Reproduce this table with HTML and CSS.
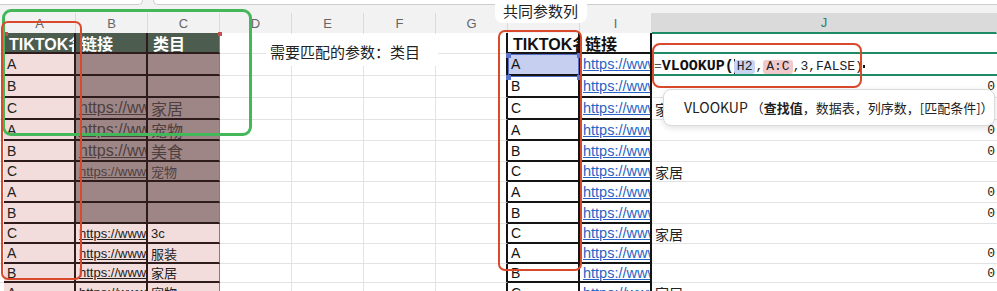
FILE: index.html
```html
<!DOCTYPE html>
<html lang="zh-CN">
<head>
<meta charset="utf-8">
<title>VLOOKUP 匹配类目</title>
<link rel="stylesheet" href="styles.css">
</head>
<body>
<div class="sheet">
  <div class="toolbar">
    <div class="toolbar-box name-box"></div>
    <div class="toolbar-box formula-box"></div>
  </div>

  <div class="col-heads">
    <div class="col-gutter"></div>
    <div class="col-head">A</div>
    <div class="col-head">B</div>
    <div class="col-head">C</div>
    <div class="col-head">D</div>
    <div class="col-head">E</div>
    <div class="col-head">F</div>
    <div class="col-head">G</div>
    <div class="col-head"></div>
    <div class="col-head">I</div>
    <div class="col-head active">J</div>
  </div>

  <div class="cells">
    <!-- row 1 -->
    <div class="gutter"></div>
    <div class="ta hd">TIKTOK名</div>
    <div class="ta hd">链接</div>
    <div class="ta hd last">类目</div>
    <div class="gl"></div><div class="gl"></div><div class="gl"></div><div class="gl edge"></div>
    <div class="tb hd">TIKTOK名</div>
    <div class="tb hd">链接</div>
    <div class="jc active-top"></div>
    <!-- row 2 -->
    <div class="gutter"></div>
    <div class="ta pk">A</div>
    <div class="ta dk"></div>
    <div class="ta dk last"></div>
    <div class="gl"></div><div class="gl"></div><div class="gl"></div><div class="gl edge"></div>
    <div class="tb sel">A</div>
    <div class="tb url">https://www</div>
    <div class="jc editing">
      <span class="fx-eq">=</span><span class="fx-fn">VLOOKUP(</span><span class="caret"></span><span class="ref ref-h">H2</span><span>,</span><span class="ref ref-a">A:C</span><span>,3,FALSE)</span><span class="caret-dot"></span>
    </div>
    <!-- row 3 -->
    <div class="gutter"></div>
    <div class="ta pk">B</div>
    <div class="ta dk"></div>
    <div class="ta dk last"></div>
    <div class="gl"></div><div class="gl"></div><div class="gl"></div><div class="gl edge"></div>
    <div class="tb">B</div>
    <div class="tb url">https://www</div>
    <div class="jc num">0</div>
    <!-- row 4 -->
    <div class="gutter"></div>
    <div class="ta pk">C</div>
    <div class="ta dk ln f16">https://www</div>
    <div class="ta dk last f16">家居</div>
    <div class="gl"></div><div class="gl"></div><div class="gl"></div><div class="gl edge"></div>
    <div class="tb">C</div>
    <div class="tb url">https://www</div>
    <div class="jc">家居</div>
    <!-- row 5 -->
    <div class="gutter"></div>
    <div class="ta pk">A</div>
    <div class="ta dk ln f16">https://www</div>
    <div class="ta dk last f16">宠物</div>
    <div class="gl"></div><div class="gl"></div><div class="gl"></div><div class="gl edge"></div>
    <div class="tb">A</div>
    <div class="tb url">https://www</div>
    <div class="jc num">0</div>
    <!-- row 6 -->
    <div class="gutter"></div>
    <div class="ta pk">B</div>
    <div class="ta dk ln f16">https://www</div>
    <div class="ta dk last f16">美食</div>
    <div class="gl"></div><div class="gl"></div><div class="gl"></div><div class="gl edge"></div>
    <div class="tb">B</div>
    <div class="tb url">https://www</div>
    <div class="jc num">0</div>
    <!-- row 7 -->
    <div class="gutter"></div>
    <div class="ta pk">C</div>
    <div class="ta dk ln f13">https://www</div>
    <div class="ta dk last f13">宠物</div>
    <div class="gl"></div><div class="gl"></div><div class="gl"></div><div class="gl edge"></div>
    <div class="tb">C</div>
    <div class="tb url">https://www</div>
    <div class="jc">家居</div>
    <!-- row 8 -->
    <div class="gutter"></div>
    <div class="ta pk">A</div>
    <div class="ta dk"></div>
    <div class="ta dk last"></div>
    <div class="gl"></div><div class="gl"></div><div class="gl"></div><div class="gl edge"></div>
    <div class="tb">A</div>
    <div class="tb url">https://www</div>
    <div class="jc num">0</div>
    <!-- row 9 -->
    <div class="gutter"></div>
    <div class="ta pk">B</div>
    <div class="ta dk"></div>
    <div class="ta dk last"></div>
    <div class="gl"></div><div class="gl"></div><div class="gl"></div><div class="gl edge"></div>
    <div class="tb">B</div>
    <div class="tb url">https://www</div>
    <div class="jc num">0</div>
    <!-- row 10 -->
    <div class="gutter"></div>
    <div class="ta pk">C</div>
    <div class="ta pk ln f13">https://www</div>
    <div class="ta pk last f13">3c</div>
    <div class="gl"></div><div class="gl"></div><div class="gl"></div><div class="gl edge"></div>
    <div class="tb">C</div>
    <div class="tb url">https://www</div>
    <div class="jc">家居</div>
    <!-- row 11 -->
    <div class="gutter"></div>
    <div class="ta pk">A</div>
    <div class="ta pk ln f13">https://www</div>
    <div class="ta pk last f13">服装</div>
    <div class="gl"></div><div class="gl"></div><div class="gl"></div><div class="gl edge"></div>
    <div class="tb">A</div>
    <div class="tb url">https://www</div>
    <div class="jc num">0</div>
    <!-- row 12 -->
    <div class="gutter"></div>
    <div class="ta pk">B</div>
    <div class="ta pk ln f13">https://www</div>
    <div class="ta pk last f13">家居</div>
    <div class="gl"></div><div class="gl"></div><div class="gl"></div><div class="gl edge"></div>
    <div class="tb">B</div>
    <div class="tb url">https://www</div>
    <div class="jc num">0</div>
    <!-- row 13 -->
    <div class="gutter"></div>
    <div class="ta pk">A</div>
    <div class="ta pk ln f13">https://www</div>
    <div class="ta pk last f13">宠物</div>
    <div class="gl"></div><div class="gl"></div><div class="gl"></div><div class="gl edge"></div>
    <div class="tb">C</div>
    <div class="tb url">https://www</div>
    <div class="jc">家居</div>
  </div>

  <!-- floating text box in D1:F2 -->
  <div class="note">需要匹配的参数：类目</div>

  <!-- range handles -->
  <span class="handle handle-range" style="left:4px;top:32px"></span>
  <span class="handle handle-range" style="left:218px;top:32px"></span>

  <!-- active reference H2 -->
  <div class="ref-frame"></div>
  <span class="handle handle-ref" style="left:506px;top:53px"></span>
  <span class="handle handle-ref" style="left:577px;top:53px"></span>
  <span class="handle handle-ref" style="left:506px;top:75px"></span>
  <span class="handle handle-ref" style="left:577px;top:75px"></span>

  <!-- callouts -->
  <div class="mark mark-green"></div>
  <div class="mark mark-a"></div>
  <div class="mark mark-h"></div>
  <div class="mark mark-fx"></div>

  <div class="tag">共同参数列</div>

  <div class="tip"><span class="tip-name">VLOOKUP</span> （<b>查找值</b>，数据表，列序数，[匹配条件]）</div>
</div>
</body>
</html>
```

FILE: styles.css
```css
* {
  box-sizing: border-box;
  margin: 0;
  padding: 0;
}

html,
body {
  width: 997px;
  height: 291px;
  overflow: hidden;
  background: #fff;
}

body {
  font-family: "Liberation Sans", "Noto Sans CJK SC", sans-serif;
  color: #222;
}

.sheet {
  position: relative;
  width: 997px;
  height: 291px;
  overflow: hidden;
  background: #f2f2f2;
}

/* top chrome */
.toolbar {
  display: flex;
  gap: 10px;
  height: 5px;
}

.toolbar-box {
  background: #fff;
  border: 1px solid #cdcdcd;
  border-top: 0;
}

.name-box {
  width: 143px;
  border-left: 0;
  border-radius: 0 0 6px 0;
}

.formula-box {
  flex: 1;
  border-right: 0;
  border-radius: 0 0 0 6px;
}

/* column letters */
.col-heads {
  display: grid;
  grid-template-columns: 4px repeat(9, 72px) 1fr;
  height: 28px;
  padding-top: 8px;
}

.col-head {
  border-right: 1px solid #dadada;
  font-size: 13px;
  line-height: 21px;
  color: #666;
  text-align: center;
}

.col-head.active {
  background: #dadada;
  color: #23836c;
  border-bottom: 2px solid #1f8a66;
  line-height: 19px;
}

/* cell grid */
.cells {
  display: grid;
  grid-template-columns: 4px repeat(9, 72px) 1fr;
  grid-template-rows: 21px 22px 22px 22px 21px 21px 20px 21px 21px 20px 20px 19px 21px;
  background: #fff;
}

.cells > div {
  display: flex;
  align-items: center;
  white-space: nowrap;
  overflow: hidden;
  min-width: 0;
}

.gutter {
  border-bottom: 1px solid #e3e3e3;
}

.gl {
  border-right: 1px solid #e3e3e3;
  border-bottom: 1px solid #e3e3e3;
}

.gl.edge {
  border-right: 2px solid #141414;
}

/* source table A:C */
.ta {
  padding-left: 3px;
  font-size: 14px;
  color: #222;
  border-right: 2px solid #2e1b1b;
  border-bottom: 2px solid #2e1b1b;
}

.ta.hd {
  background: #4c5d4f;
  color: #fff;
  font-weight: bold;
  font-size: 16px;
  padding-left: 5px;
}

.ta.pk {
  background: #f2dddc;
}

.ta.dk {
  background: #9e8686;
  color: #4e3f3f;
}

.ta.last {
  border-right: 1px solid #c96060;
}

.ln {
  text-decoration: underline;
}

.f16 {
  font-size: 16px;
}

.f13 {
  font-size: 13px;
}

/* lookup table H:I */
.tb {
  padding-left: 3px;
  font-size: 14px;
  color: #111;
  border-right: 2px solid #141414;
  border-bottom: 2px solid #141414;
}

.tb.hd {
  font-weight: bold;
  font-size: 16px;
  padding-left: 5px;
}

.tb.url {
  color: #2763c4;
  text-decoration: underline;
  font-size: 14.5px;
}

.tb.sel {
  background: #c6cff0;
}

/* result column J */
.jc {
  border-bottom: 1px solid #e3e3e3;
  padding-left: 3px;
  font-family: "Noto Sans CJK SC", sans-serif;
  font-size: 14px;
  color: #222;
}

.jc.num {
  justify-content: flex-end;
  padding-right: 2px;
  font-family: "Liberation Mono", monospace;
  font-size: 13px;
}

.jc.active-top {
  border-bottom: 2px solid #1f8a66;
}

.jc.editing {
  border-bottom: 2px solid #1f8a66;
  padding-left: 2px;
  padding-top: 5px;
  font-family: "Liberation Mono", monospace;
  font-size: 13px;
  color: #222;
}

.fx-eq {
  color: #555;
}

.fx-fn {
  font-weight: bold;
  font-size: 15px;
  color: #111;
}

.caret {
  width: 1px;
  height: 15px;
  background: #111;
  margin-right: -1px;
}

.ref {
  padding: 0 3px;
  border-radius: 3px;
  line-height: 14px;
}

.ref-h {
  background: #c9d4f1;
}

.ref-a {
  background: #f1c9cb;
}

.caret-dot {
  width: 2px;
  height: 3px;
  background: #111;
}

/* floating overlays */
.note {
  position: absolute;
  left: 266px;
  top: 34px;
  width: 172px;
  height: 32px;
  padding: 8px 0 0 4px;
  background: #fff;
  font-family: "Noto Sans CJK SC", sans-serif;
  font-size: 15px;
  line-height: 20px;
  color: #222;
}

.handle {
  position: absolute;
}

.handle-range {
  width: 4px;
  height: 4px;
  background: #c0504d;
}

.handle-ref {
  width: 5px;
  height: 5px;
  background: #5a72c8;
}

.ref-frame {
  position: absolute;
  left: 508px;
  top: 54px;
  width: 71px;
  height: 23px;
  border: 1.5px solid #5570c6;
}

.mark {
  position: absolute;
  border: 2.5px solid #d9492c;
  border-radius: 7px;
}

.mark-green {
  left: 2px;
  top: 9px;
  width: 250px;
  height: 127px;
  border: 3px solid #43b75a;
  border-radius: 9px;
}

.mark-a {
  left: 1px;
  top: 21px;
  width: 81px;
  height: 259px;
}

.mark-h {
  left: 498px;
  top: 30px;
  width: 84px;
  height: 241px;
}

.mark-fx {
  left: 652px;
  top: 43px;
  width: 210px;
  height: 45px;
  border-radius: 8px;
}

.tag {
  position: absolute;
  left: 495px;
  top: -8px;
  width: 92px;
  height: 31px;
  padding: 8px 0 0 8px;
  background: #fff;
  border-radius: 8px;
  font-family: "Noto Sans CJK SC", sans-serif;
  font-size: 15px;
  line-height: 22px;
  color: #222;
}

.tip {
  position: absolute;
  left: 663px;
  top: 89px;
  width: 332px;
  height: 37px;
  padding-left: 20px;
  background: #fff;
  border: 1px solid #dadada;
  border-radius: 8px;
  box-shadow: 0 2px 6px rgba(0, 0, 0, 0.12);
  font-family: "Noto Sans CJK SC", sans-serif;
  font-size: 13px;
  line-height: 35px;
  color: #222;
  white-space: nowrap;
}

.tip-name {
  font-size: 14px;
}

.tip b {
  font-weight: bold;
}
```
